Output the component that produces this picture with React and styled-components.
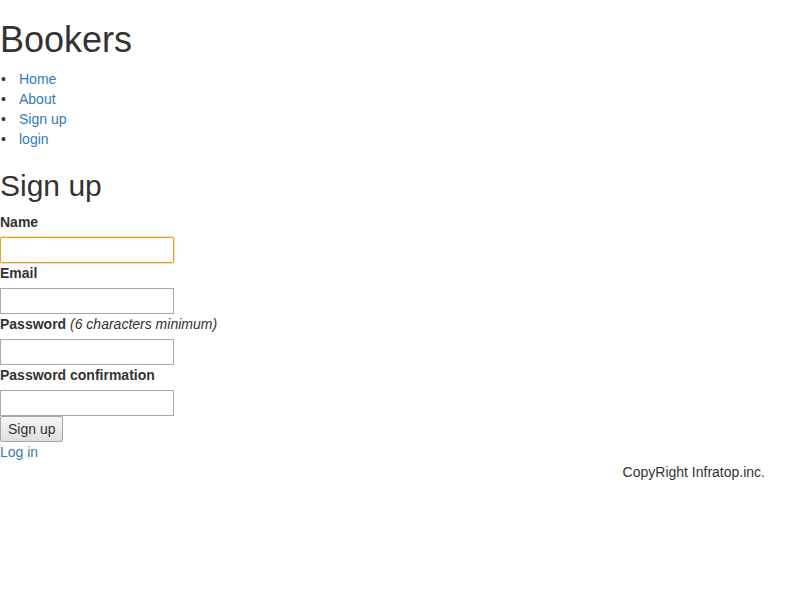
import styled, { createGlobalStyle } from "styled-components";

const GlobalStyle = createGlobalStyle`
  html, body {
    margin: 0;
    padding: 0;
    background: #fff;
  }
  body {
    font-family: "Liberation Sans", Arial, sans-serif;
    font-size: 14px;
    line-height: 20px;
    color: #333;
  }
`;

const Page = styled.div`
  display: flex;
  flex-direction: column;
  align-items: flex-start;
`;

const Title = styled.h1`
  font-size: 36px;
  font-weight: 400;
  line-height: 39px;
  margin: 20px 0 10px;
`;

const NavList = styled.ul`
  list-style: none;
  margin: 0 0 10px;
  padding-left: 19px;
`;

const NavItem = styled.li`
  line-height: 20px;
  &::before {
    content: "•";
    display: inline-block;
    width: 19px;
    margin-left: -19px;
    padding-left: 1px;
    box-sizing: border-box;
    color: #333;
  }
`;

const Link = styled.a`
  color: #337ab7;
  text-decoration: none;
`;

const Heading = styled.h2`
  font-size: 30px;
  font-weight: 400;
  line-height: 33px;
  margin: 10px 0 10px;
`;

const Form = styled.form`
  display: flex;
  flex-direction: column;
  align-items: flex-start;
`;

const Field = styled.div`
  display: flex;
  flex-direction: column;
  align-items: flex-start;
`;

const Label = styled.label`
  font-weight: 700;
  line-height: 20px;
  margin-bottom: 5px;
`;

const Hint = styled.em`
  font-weight: 400;
`;

const Input = styled.input`
  box-sizing: border-box;
  width: 174px;
  height: 26px;
  margin: 0;
  padding: 1px 2px;
  font: inherit;
  border: 1px solid ${(p) => (p.$active ? "#e3a02f" : "#a9a9a9")};
  border-radius: ${(p) => (p.$active ? "2px" : "0")};
  box-shadow: ${(p) => (p.$active ? "0 0 0 1px rgba(240, 190, 90, 0.5)" : "none")};
  background: #fff;
  outline: none;
  caret-color: #000;
`;

const Button = styled.button`
  box-sizing: border-box;
  height: 26px;
  margin: 0;
  padding: 0 7px;
  font: inherit;
  color: #333;
  background: linear-gradient(#f6f6f6, #dedede);
  border: 1px solid #a6a6a6;
  border-radius: 2px;
`;

const Footer = styled.footer`
  box-sizing: border-box;
  width: calc(100% + 15px);
  padding-right: 50px;
  text-align: right;
  line-height: 20px;
`;

const fields = [
  { label: "Name", type: "text", active: true },
  { label: "Email", type: "email" },
  { label: "Password", hint: "(6 characters minimum)", type: "password" },
  { label: "Password confirmation", type: "password" },
];

export default function App() {
  return (
    <Page>
      <GlobalStyle />
      <Title>Bookers</Title>
      <NavList>
        <NavItem><Link href="#">Home</Link></NavItem>
        <NavItem><Link href="#">About</Link></NavItem>
        <NavItem><Link href="#">Sign up</Link></NavItem>
        <NavItem><Link href="#">login</Link></NavItem>
      </NavList>
      <Heading>Sign up</Heading>
      <Form onSubmit={(e) => e.preventDefault()}>
        {fields.map((f) => (
          <Field key={f.label}>
            <Label>
              {f.label}
              {f.hint && <> <Hint>{f.hint}</Hint></>}
            </Label>
            <Input type={f.type} $active={f.active} autoFocus={f.active} />
          </Field>
        ))}
        <Button type="submit">Sign up</Button>
      </Form>
      <Link href="#">Log in</Link>
      <Footer>CopyRight Infratop.inc.</Footer>
    </Page>
  );
}
